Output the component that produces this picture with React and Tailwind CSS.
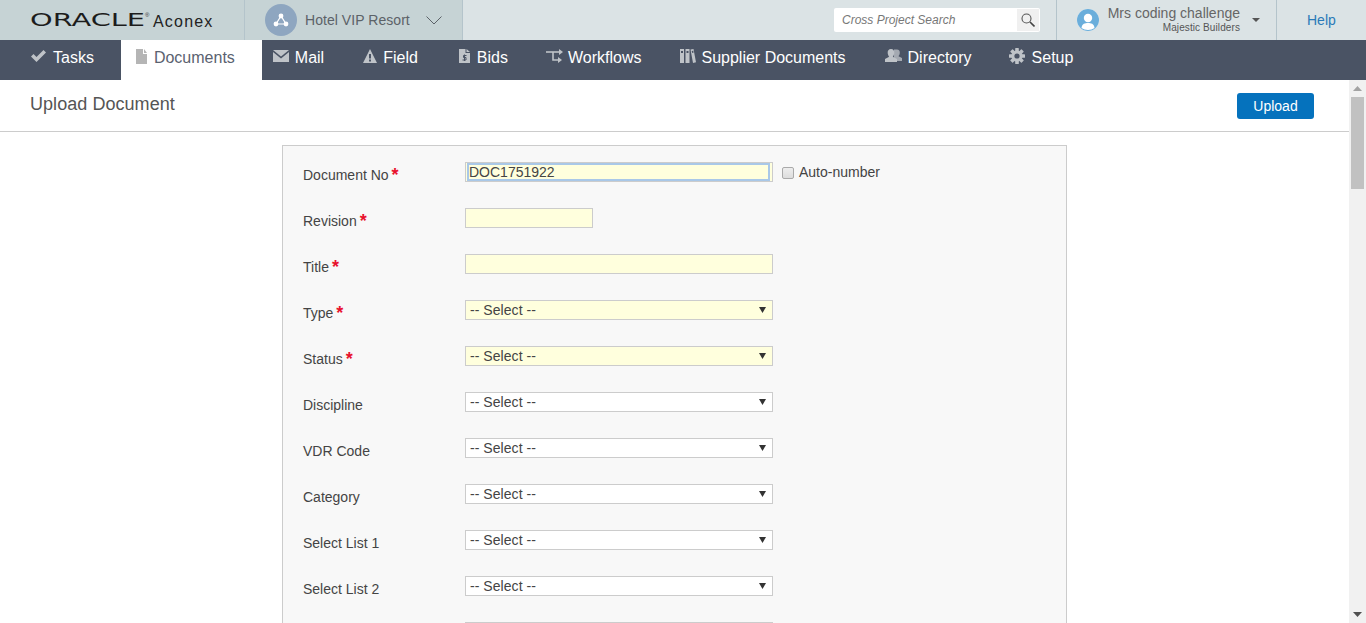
const NAV = [
  { label: 'Tasks', icon: CheckIcon, cls: 'pl-[30px] pr-[27px] gap-[6px]' },
  { label: 'Documents', icon: FileIcon, active: true, cls: 'pl-[14px] pr-[27px] gap-[6px]' },
  { label: 'Mail', icon: MailIcon, cls: 'pl-[11px] pr-[20px] gap-[6px]' },
  { label: 'Field', icon: WarnIcon, cls: 'pl-[19px] pr-[21px] gap-[6px]' },
  { label: 'Bids', icon: BidIcon, cls: 'pl-[20px] pr-[18px] gap-[7px]' },
  { label: 'Workflows', icon: FlowIcon, cls: 'pl-[20px] pr-[20px] gap-[5px]' },
  { label: 'Supplier Documents', icon: BinderIcon, cls: 'pl-[19px] pr-[21px] gap-[5px]' },
  { label: 'Directory', icon: UsersIcon, cls: 'pl-[18px] pr-[19px] gap-[6px]' },
  { label: 'Setup', icon: GearIcon, cls: 'pl-[18px] pr-[18px] gap-[7px]' },
]

const ROWS = [
  { label: 'Type', required: true },
  { label: 'Status', required: true },
  { label: 'Discipline' },
  { label: 'VDR Code' },
  { label: 'Category' },
  { label: 'Select List 1' },
  { label: 'Select List 2' },
]

const ICON = '#bfc3c8'

function CheckIcon() {
  return (
    <svg width="17" height="14" viewBox="0 0 17 14">
      <path d="M1 7.5 L3.5 5 L6.5 8 L13.5 1 L16 3.5 L6.5 13 Z" fill={ICON} />
    </svg>
  )
}

function FileIcon({ active }) {
  const c = active ? '#b5b5b5' : ICON
  return (
    <svg width="13" height="15" viewBox="0 0 13 15">
      <path d="M1 0 H8 V5 H12 V15 H1 Z" fill={c} />
      <path d="M9 0 L12 4 H9 Z" fill={c} />
    </svg>
  )
}

function MailIcon() {
  return (
    <svg width="16" height="12" viewBox="0 0 16 12">
      <path d="M0 0 H16 L8 6.5 Z" fill={ICON} />
      <path d="M0 2 L8 8.5 L16 2 V12 H0 Z" fill={ICON} />
    </svg>
  )
}

function WarnIcon() {
  return (
    <svg width="14" height="14" viewBox="0 0 14 14">
      <path fillRule="evenodd" d="M7 0 L14 14 H0 Z M6 5 V9.5 H8 V5 Z M6 10.5 V12.5 H8 V10.5 Z" fill={ICON} />
    </svg>
  )
}

function BidIcon() {
  return (
    <svg width="11" height="14" viewBox="0 0 11 14">
      <path d="M0 0 H6.5 V4 H11 V14 H0 Z" fill={ICON} />
      <path d="M7.5 0 L11 3 H7.5 Z" fill={ICON} />
      <path d="M7.5 6.5 H4.5 V8.5 H7 V11 H3.5 M5.5 5.5 V12" stroke="#4a5364" strokeWidth="1" fill="none" />
    </svg>
  )
}

function FlowIcon() {
  return (
    <svg width="17" height="14" viewBox="0 0 17 14">
      <path d="M0 3 H13" stroke={ICON} strokeWidth="1.6" fill="none" />
      <path d="M13 0 L17 3 L13 6 Z" fill={ICON} />
      <path d="M7 3 V11 H12" stroke={ICON} strokeWidth="1.6" fill="none" />
      <path d="M12 8 L16 11 L12 14 Z" fill={ICON} />
    </svg>
  )
}

function BinderIcon() {
  return (
    <svg width="16" height="14" viewBox="0 0 16 14">
      <path fillRule="evenodd" d="M0 0 H4 V14 H0 Z M1 2 V4 H3 V2 Z M5.5 0 H9.5 V14 H5.5 Z M6.5 2 V4 H8.5 V2 Z" fill={ICON} />
      <path fillRule="evenodd" d="M10.5 0.6 L13.5 0 L16 13.2 L13 14 Z M11.7 2 L12.2 4 L13.7 3.6 L13.2 1.7 Z" fill={ICON} />
    </svg>
  )
}

function UsersIcon() {
  return (
    <svg width="17" height="14" viewBox="0 0 17 14">
      <path d="M12 0.5 C14 0.5 15 2 14.8 4 C14.7 5.5 14 6.5 13.5 7.2 L17 9 V12 H12 L9 9 V0.5 Z" fill="#a4a9b1" />
      <path d="M6 0 C8.3 0 9.6 1.8 9.3 4.2 C9.1 5.8 8.4 7 7.8 7.8 L12 10 V13 H0 V10 L4.2 7.8 C3.6 7 2.9 5.8 2.7 4.2 C2.4 1.8 3.7 0 6 0 Z" fill={ICON} />
    </svg>
  )
}

function GearIcon() {
  return (
    <svg width="16" height="16" viewBox="0 0 16 16">
      <g fill={ICON}>
        <circle cx="8" cy="8" r="5.6" />
        <rect x="6.2" y="0" width="3.6" height="16" rx="0.6" />
        <rect x="6.2" y="0" width="3.6" height="16" rx="0.6" transform="rotate(45 8 8)" />
        <rect x="6.2" y="0" width="3.6" height="16" rx="0.6" transform="rotate(90 8 8)" />
        <rect x="6.2" y="0" width="3.6" height="16" rx="0.6" transform="rotate(135 8 8)" />
      </g>
      <circle cx="8" cy="8" r="2.6" fill="#4a5364" />
    </svg>
  )
}

function Label({ text, required }) {
  return (
    <div className="w-[162px] flex items-start text-[14px] leading-[20px] text-[#444] pt-[3px]">
      <span>{text}</span>
      {required && <span className="ml-[3px] mt-[1px] text-[18px] font-bold leading-[18px] text-[#e8112d]">*</span>}
    </div>
  )
}

function Select({ yellow }) {
  return (
    <div
      className={`relative w-[308px] h-[20px] border border-[#ccc] flex items-center pl-[4px] text-[14px] tracking-[0.05px] text-[#444] ${
        yellow ? 'bg-[#ffffdd]' : 'bg-white'
      }`}
    >
      -- Select --
      <svg className="absolute right-[6px] top-[6px]" width="7" height="6" viewBox="0 0 7 6">
        <path d="M0 0 H7 L3.5 6 Z" fill="#333" />
      </svg>
    </div>
  )
}

export default function App() {
  return (
    <div className="h-[623px] overflow-hidden bg-white font-['Liberation_Sans',Arial,sans-serif]">
      {/* top bar */}
      <div className="h-[40px] flex bg-[#dbe3e5]">
        <div className="w-[463px] flex bg-[#c6d3d5] border-r border-[#b4c4cb]">
          <div className="w-[245px] pl-[30px] flex items-center border-r border-[#b4c4cb]">
            <span className="font-['DejaVu_Sans',sans-serif] text-[18px] leading-none text-[#1c1c1c] w-[115px] scale-x-[1.6] origin-left">
              ORACLE
            </span>
            <span className="w-[8px] self-start mt-[12px] text-[6px] leading-none text-[#333]">®</span>
            <span className="text-[16px] tracking-[1.2px] text-[#222] mt-[3px]">Aconex</span>
          </div>
          <div className="flex-1 pl-[20px] flex items-center">
            <div className="w-[32px] h-[32px] rounded-full bg-[#8ea6c0] flex items-center justify-center">
              <svg width="16" height="14" viewBox="0 0 16 14">
                <path d="M8 3 L3 11 H13 Z" stroke="#fff" strokeWidth="1.2" fill="none" />
                <circle cx="8" cy="3" r="2.4" fill="#fff" />
                <circle cx="3" cy="11" r="2.4" fill="#fff" />
                <circle cx="13" cy="11" r="2.4" fill="#fff" />
              </svg>
            </div>
            <span className="ml-[8px] text-[14px] tracking-[0.05px] text-[#5c6268]">Hotel VIP Resort</span>
            <svg className="ml-[16px]" width="16" height="9" viewBox="0 0 16 9">
              <path d="M0.5 0.5 L8 8 L15.5 0.5" stroke="#5c6268" strokeWidth="1" fill="none" />
            </svg>
          </div>
        </div>
        <div className="flex-1 flex items-center justify-end">
          <div className="w-[206px] h-[24px] mr-[16px] rounded-[2px] bg-white flex items-center justify-between pl-[8px] pr-[1px]">
            <span className="text-[12px] italic text-[#777]">Cross Project Search</span>
            <div className="w-[22px] h-[22px] bg-[#f0f0f0] flex items-center justify-center">
              <svg width="14" height="14" viewBox="0 0 14 14">
                <circle cx="5.5" cy="5.5" r="4.5" stroke="#555" strokeWidth="1.1" fill="none" />
                <path d="M9 9 L13.5 13.5" stroke="#444" strokeWidth="1.6" />
              </svg>
            </div>
          </div>
          <div className="h-[40px] w-[221px] flex items-center border-x border-[#b4c4cb] pl-[20px]">
            <div className="w-[22px] h-[22px] rounded-full bg-white flex items-center justify-center">
              <svg width="22" height="22" viewBox="0 0 22 22">
                <circle cx="11" cy="11" r="11" fill="#6aaedb" />
                <circle cx="11" cy="9" r="4.2" fill="#fff" />
                <path d="M4.5 19 C5 14.5 8 14 11 14 C14 14 17 14.5 17.5 19 C14 21.5 8 21.5 4.5 19 Z" fill="#fff" />
              </svg>
            </div>
            <div className="ml-[8px] w-[133px] shrink-0 flex flex-col items-end whitespace-nowrap">
              <span className="text-[14px] leading-[15px] text-[#666]">Mrs coding challenge</span>
              <span className="text-[10px] leading-[13px] tracking-[0.1px] text-[#555]">Majestic Builders</span>
            </div>
            <svg className="ml-[12px]" width="8" height="4" viewBox="0 0 8 4">
              <path d="M0 0 H8 L4 4 Z" fill="#555" />
            </svg>
          </div>
          <div className="w-[89px] pl-[30px] text-[14px] text-[#2a7ab8]">Help</div>
        </div>
      </div>

      {/* nav */}
      <div className="h-[40px] flex bg-[#4a5364]">
        {NAV.map((item) => {
          const Icon = item.icon
          return (
            <div
              key={item.label}
              className={`flex items-center text-[16px] ${item.cls} ${item.active ? 'bg-white text-[#5a6270]' : 'text-white'}`}
            >
              <span className="shrink-0 flex items-center -mt-[8px]">
                <Icon active={item.active} />
              </span>
              <span className="-mt-[5px]">{item.label}</span>
            </div>
          )
        })}
      </div>

      <div className="flex h-[543px]">
        <div className="flex-1 min-w-0">
          <div className="h-[52px] border-b border-[#ccc] pl-[30px] pr-[35px] flex items-center justify-between">
            <span className="text-[18px] tracking-[0.05px] text-[#555] -mt-[2px]">Upload Document</span>
            <button className="w-[77px] h-[26px] pt-[2px] rounded-[3px] bg-[#0572bd] text-[14px] text-white">Upload</button>
          </div>

          <div className="ml-[282px] mt-[13px] w-[785px] h-[500px] border border-[#ccc] bg-[#f8f8f8] pl-[20px] pt-[16px]">
            <div className="h-[46px] flex">
              <Label text="Document No" required />
              <div className="w-[308px] h-[20px] border border-[#ccc] bg-[#ffffdd] pl-[1px] pr-[2px]">
                <div className="h-[18px] border-2 border-[#a9c8e8] text-[14px] leading-[14px] text-[#444]">
                  DOC1751922
                </div>
              </div>
              <div className="ml-[9px] h-[20px] flex items-center text-[14px] text-[#444]">
                <span className="w-[12px] h-[12px] mt-[1px] rounded-[2px] border border-[#aaa] bg-gradient-to-b from-[#eee] to-[#ddd]" />
                <span className="ml-[5px]">Auto-number</span>
              </div>
            </div>
            <div className="h-[46px] flex">
              <Label text="Revision" required />
              <div className="w-[128px] h-[20px] border border-[#ccc] bg-[#ffffdd]" />
            </div>
            <div className="h-[46px] flex">
              <Label text="Title" required />
              <div className="w-[308px] h-[20px] border border-[#ccc] bg-[#ffffdd]" />
            </div>
            {ROWS.map((r, i) => (
              <div key={r.label} className="h-[46px] flex">
                <Label text={r.label} required={r.required} />
                <Select yellow={i < 2} />
              </div>
            ))}
            <div className="h-[46px] flex">
              <div className="w-[162px]" />
              <div className="w-[308px] h-[20px] border border-[#ccc] bg-white" />
            </div>
          </div>
        </div>

        {/* scrollbar */}
        <div className="w-[17px] bg-[#f1f1f1] relative flex flex-col items-center">
          <svg className="mt-[6px]" width="9" height="5" viewBox="0 0 9 5">
            <path d="M4.5 0 L9 5 H0 Z" fill="#a3a3a3" />
          </svg>
          <div className="mt-[6px] w-[13px] h-[92px] bg-[#c1c1c1]" />
          <svg className="mt-auto mb-[6px]" width="9" height="5" viewBox="0 0 9 5">
            <path d="M0 0 H9 L4.5 5 Z" fill="#505050" />
          </svg>
        </div>
      </div>
    </div>
  )
}
